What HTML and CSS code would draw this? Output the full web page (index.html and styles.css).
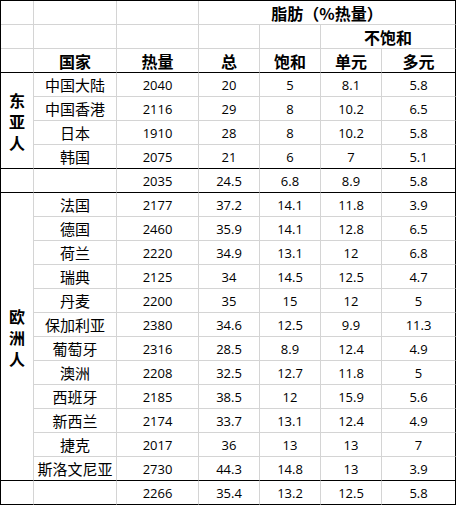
FILE: index.html
```html
<!DOCTYPE html>
<html lang="zh">
<head>
<meta charset="utf-8">
<title>脂肪摄入</title>
<link rel="stylesheet" href="styles.css">
</head>
<body>
<table class="sheet">
  <colgroup>
    <col class="c-region"><col class="c-country"><col class="c-kcal"><col class="c-num"><col class="c-num"><col class="c-num"><col class="c-last">
  </colgroup>
  <tr>
    <td></td><td></td><td></td>
    <td colspan="4" class="hd">脂肪（%热量）</td>
  </tr>
  <tr>
    <td></td><td></td><td></td><td></td><td></td>
    <td colspan="2" class="hd">不饱和</td>
  </tr>
  <tr class="blk">
    <td></td><td class="hd">国家</td><td class="hd">热量</td><td class="hd">总</td><td class="hd">饱和</td><td class="hd">单元</td><td class="hd">多元</td>
  </tr>
  <tr>
    <td rowspan="4" class="region blk-b"><span class="ch">东</span><span class="ch">亚</span><span class="ch">人</span></td>
    <td class="cn">中国大陆</td><td>2040</td><td>20</td><td>5</td><td>8.1</td><td>5.8</td>
  </tr>
  <tr><td class="cn">中国香港</td><td>2116</td><td>29</td><td>8</td><td>10.2</td><td>6.5</td></tr>
  <tr><td class="cn">日本</td><td>1910</td><td>28</td><td>8</td><td>10.2</td><td>5.8</td></tr>
  <tr class="blk"><td class="cn">韩国</td><td>2075</td><td>21</td><td>6</td><td>7</td><td>5.1</td></tr>
  <tr class="blk"><td></td><td></td><td>2035</td><td>24.5</td><td>6.8</td><td>8.9</td><td>5.8</td></tr>
  <tr>
    <td rowspan="12" class="region blk-b"><span class="ch">欧</span><span class="ch">洲</span><span class="ch">人</span></td>
    <td class="cn">法国</td><td>2177</td><td>37.2</td><td>14.1</td><td>11.8</td><td>3.9</td>
  </tr>
  <tr><td class="cn">德国</td><td>2460</td><td>35.9</td><td>14.1</td><td>12.8</td><td>6.5</td></tr>
  <tr><td class="cn">荷兰</td><td>2220</td><td>34.9</td><td>13.1</td><td>12</td><td>6.8</td></tr>
  <tr><td class="cn">瑞典</td><td>2125</td><td>34</td><td>14.5</td><td>12.5</td><td>4.7</td></tr>
  <tr><td class="cn">丹麦</td><td>2200</td><td>35</td><td>15</td><td>12</td><td>5</td></tr>
  <tr><td class="cn">保加利亚</td><td>2380</td><td>34.6</td><td>12.5</td><td>9.9</td><td>11.3</td></tr>
  <tr><td class="cn">葡萄牙</td><td>2316</td><td>28.5</td><td>8.9</td><td>12.4</td><td>4.9</td></tr>
  <tr><td class="cn">澳洲</td><td>2208</td><td>32.5</td><td>12.7</td><td>11.8</td><td>5</td></tr>
  <tr><td class="cn">西班牙</td><td>2185</td><td>38.5</td><td>12</td><td>15.9</td><td>5.6</td></tr>
  <tr><td class="cn">新西兰</td><td>2174</td><td>33.7</td><td>13.1</td><td>12.4</td><td>4.9</td></tr>
  <tr><td class="cn">捷克</td><td>2017</td><td>36</td><td>13</td><td>13</td><td>7</td></tr>
  <tr class="blk"><td class="cn">斯洛文尼亚</td><td>2730</td><td>44.3</td><td>14.8</td><td>13</td><td>3.9</td></tr>
  <tr class="blk"><td></td><td></td><td>2266</td><td>35.4</td><td>13.2</td><td>12.5</td><td>5.8</td></tr>
</table>
</body>
</html>
```

FILE: styles.css
```css
html, body {
  margin: 0;
  padding: 0;
  background: #fff;
}

.sheet {
  border-collapse: separate;
  border-spacing: 0;
  table-layout: fixed;
  width: 456px;
  border-top: 1px solid #000;
  border-left: 1px solid #000;
  font-family: "Open Sans", "Noto Sans CJK SC", sans-serif;
  font-size: 13px;
  color: #000;
}

.c-region { width: 33px; }
.c-country { width: 83px; }
.c-kcal { width: 82px; }
.c-num { width: 61px; }
.c-last { width: 74px; }

.sheet tr {
  height: 24px;
}

.sheet td {
  box-sizing: border-box;
  height: 24px;
  padding: 0;
  text-align: center;
  vertical-align: middle;
  border-right: 1px solid #d4d4d4;
  border-bottom: 1px solid #d4d4d4;
  white-space: nowrap;
  line-height: 18px;
}

.sheet td:last-child {
  border-right-color: #000;
}

.sheet tr.blk td,
.sheet td.blk-b {
  border-bottom-color: #000;
}

.sheet td.hd {
  font-family: "Noto Sans CJK SC", sans-serif;
  font-weight: bold;
  font-size: 16px;
}

.sheet td.cn {
  font-family: "Noto Sans CJK SC", sans-serif;
  font-size: 15px;
}

.sheet td.region {
  font-family: "Noto Sans CJK SC", sans-serif;
  font-weight: bold;
  font-size: 16px;
  line-height: 16px;
  white-space: normal;
}

.region .ch {
  display: block;
  margin: 5px 0;
}
```
